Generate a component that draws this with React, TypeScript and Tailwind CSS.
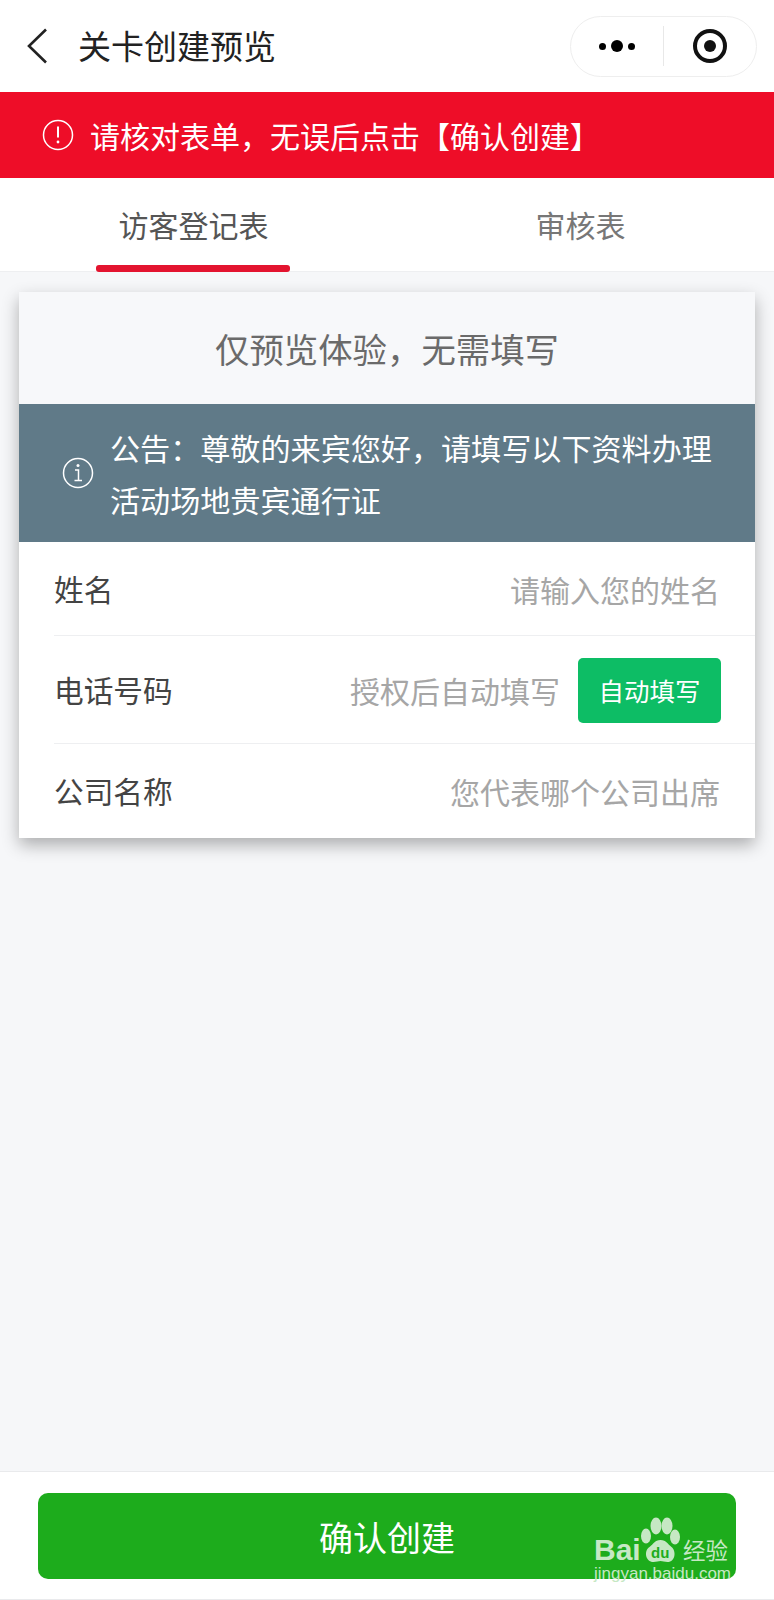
const cjk = "font-['Noto_Sans_CJK_SC','Noto_Sans',sans-serif]";

function Row({ label, hint, button, last }: { label: string; hint: string; button?: boolean; last?: boolean }) {
  return (
    <div className={`ml-[35px] flex items-center justify-between pr-[34px] ${button ? 'h-[108px] pt-[2px]' : 'h-[94px]'} ${last ? '' : 'border-b border-[#eeeff1] pt-[2px]'}`}>
      <span className="text-[29.7px] text-[#444444]">{label}</span>
      <div className="flex items-center">
        <span className={`text-[30px] text-[#a6a6a6] ${button ? '' : 'pr-px'}`}>{hint}</span>
        {button && (
          <span className="ml-[18px] flex h-[65px] w-[143px] items-center justify-center rounded-[5px] bg-[#0dbd65] text-[25.5px] text-white">
            自动填写
          </span>
        )}
      </div>
    </div>
  );
}

export default function App() {
  return (
    <div className={`${cjk} flex h-[1600px] w-[774px] flex-col bg-[#f6f7f9]`}>
      {/* Nav bar */}
      <div className="flex h-[92px] shrink-0 items-center justify-between bg-white pl-[25px] pr-[17px]">
        <div className="flex items-center">
          <svg width="22" height="36" viewBox="0 0 22 36" fill="none" stroke="#222222" strokeWidth="2.6">
            <path d="M21 1.5 4 18l17 16.500" />
          </svg>
          <span className="ml-[31px] text-[33px] text-[#222222]">关卡创建预览</span>
        </div>
        <div className="flex h-[61px] w-[187px] items-center rounded-full border border-[#eeeeee] bg-white">
          <div className="flex w-[92px] items-center justify-center gap-[5px]">
            <span className="h-[7px] w-[7px] rounded-full bg-black" />
            <span className="h-[12px] w-[12px] rounded-full bg-black" />
            <span className="h-[7px] w-[7px] rounded-full bg-black" />
          </div>
          <div className="h-[40px] w-px bg-[#e8e8e8]" />
          <div className="flex flex-1 items-center justify-center">
            <span className="flex h-[34px] w-[34px] items-center justify-center rounded-full border-[4px] border-[#111111]">
              <span className="h-[12px] w-[12px] rounded-full bg-[#111111]" />
            </span>
          </div>
        </div>
      </div>

      {/* Alert */}
      <div className="flex h-[86px] shrink-0 items-center bg-[#ee0d28] pl-[42px] text-white">
        <svg width="32" height="32" viewBox="0 0 32 32" fill="none" stroke="white" strokeWidth="1.5">
          <circle cx="16" cy="16" r="14.5" />
          <path d="M16 7.5v11" strokeWidth="2" />
          <circle cx="16" cy="23" r="1.4" fill="white" stroke="none" />
        </svg>
        <span className="ml-[16px] text-[30px]">请核对表单，无误后点击【确认创建】</span>
      </div>

      {/* Tabs */}
      <div className="flex h-[94px] shrink-0 border-b border-[#eeeff1] bg-white">
        <div className="relative flex w-[387px] items-center justify-center">
          <span className="text-[30px] text-[#555555]">访客登记表</span>
          <span className="absolute bottom-[-1px] left-[96px] h-[7px] w-[194px] rounded-[3px] bg-[#e3142f]" />
        </div>
        <div className="flex w-[387px] items-center justify-center">
          <span className="text-[30px] text-[#777777]">审核表</span>
        </div>
      </div>

      <div className="flex-1 px-[19px] pt-[20px]">
        {/* Form card */}
        <div className="overflow-hidden bg-white shadow-[0_7px_16px_rgba(0,0,0,0.3)]">
          <div className="flex h-[112px] items-center justify-center bg-[#f7f8fa] pt-[2px] text-[34.4px] text-[#6a6a6a]">
            仅预览体验，无需填写
          </div>
          <div className="flex h-[138px] items-center bg-[#607a88] pl-[43px] pr-[30px] text-white">
            <svg className="shrink-0" width="32" height="32" viewBox="0 0 32 32" fill="none" stroke="white" strokeWidth="1.5">
              <circle cx="16" cy="16" r="14.5" />
              <path d="M13 13h3.5v10M12.5 23.5h7.5" strokeWidth="1.5" />
              <circle cx="16" cy="8.5" r="1.5" fill="white" stroke="none" />
            </svg>
            <p className="ml-[16px] text-[30.1px] leading-[52px]">公告：尊敬的来宾您好，请填写以下资料办理活动场地贵宾通行证</p>
          </div>
          <Row label="姓名" hint="请输入您的姓名" />
          <Row label="电话号码" hint="授权后自动填写" button />
          <Row label="公司名称" hint="您代表哪个公司出席" last />
        </div>
      </div>

      {/* Bottom action */}
      <div className="relative h-[129px] shrink-0 border-y border-[#e9eaec] bg-white px-[38px] pt-[21px]">
        <div className="flex h-[86px] items-center justify-center rounded-[10px] bg-[#1dac1c] text-[34px] text-white">
          确认创建
        </div>
        {/* Watermark */}
        <div className="absolute left-[594px] top-[45px] h-[68px] w-[140px] text-[#c6e8c4]">
          <svg className="absolute left-[47px] top-0" width="40" height="46" viewBox="0 0 40 46" fill="currentColor">
            <ellipse cx="15" cy="9" rx="5.500" ry="8.500" />
            <ellipse cx="26" cy="9" rx="5.500" ry="8.500" />
            <ellipse cx="5" cy="19" rx="5" ry="7.500" />
            <ellipse cx="34" cy="20" rx="5" ry="7.500" />
            <path d="M19.500 23c6 0 7 4 11 7 5 4 4 15-4 15-3 0-5-1-7-1s-4 1-7 1c-8 0-10-11-4-15 4-3 5-7 11-7z" />
          </svg>
          <span className="absolute left-0 top-[19px] font-['Liberation_Sans',sans-serif] text-[30px] font-bold leading-[28px]">Bai</span>
          <span className="absolute left-[57px] top-[28px] font-['Liberation_Sans',sans-serif] text-[15px] font-bold leading-[16px] text-[#1dac1c]">du</span>
          <span className="absolute left-[89px] top-[17px] text-[22.5px] leading-[30px]">经验</span>
          <span className="absolute left-0 top-[48px] font-['Liberation_Sans',sans-serif] text-[17px] leading-[18px]">jingyan.baidu.com</span>
        </div>
      </div>
    </div>
  );
}
